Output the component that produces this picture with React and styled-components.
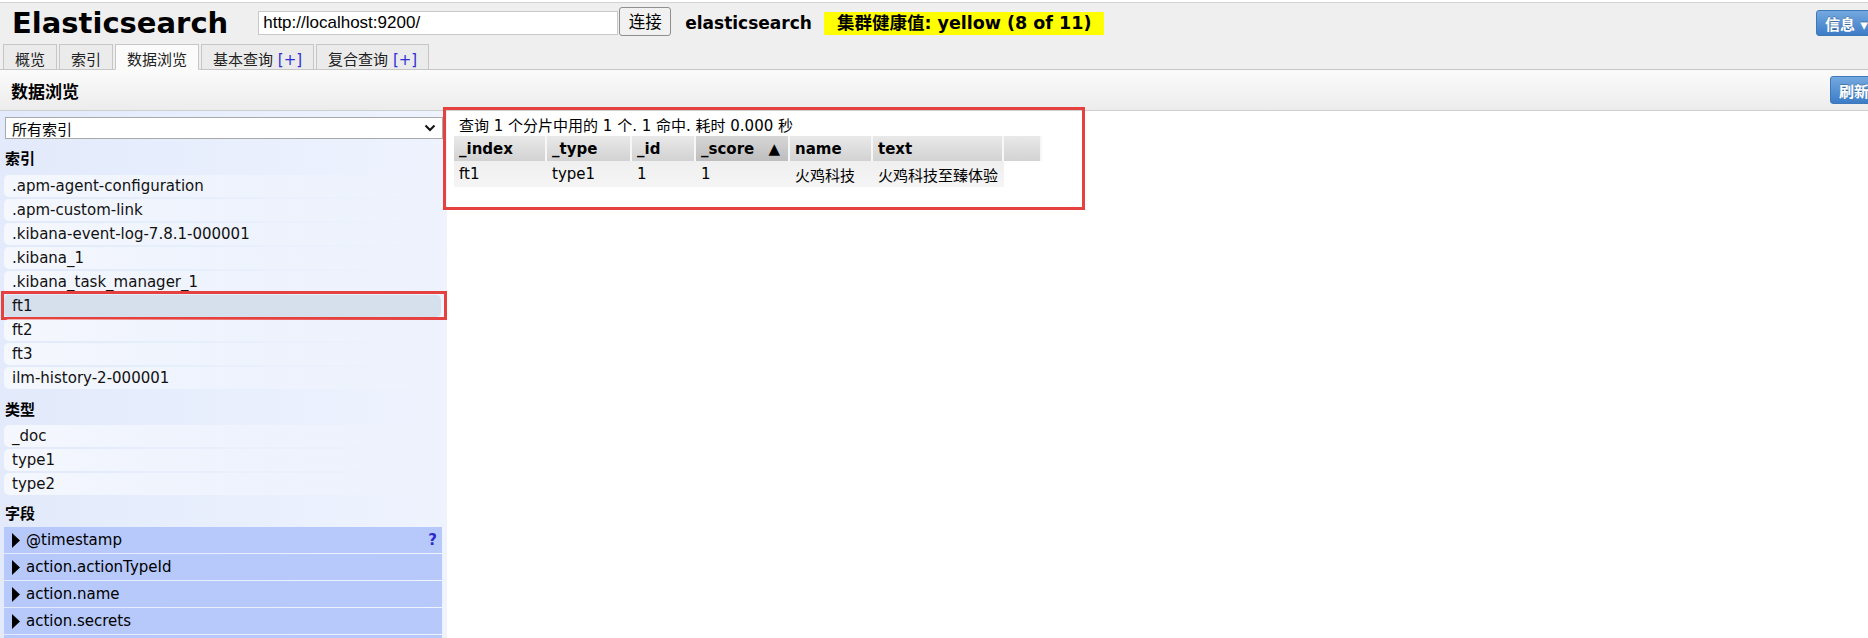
import styled, { createGlobalStyle } from 'styled-components'

const GlobalStyle = createGlobalStyle`
  html, body {
    margin: 0;
    padding: 0;
    background: #fff;
    overflow: hidden;
  }
  body {
    padding-top: 2px;
    font-family: "DejaVu Sans", "Noto Sans CJK SC", sans-serif;
    font-size: 15px;
    color: #000;
  }
`

const Page = styled.div`
  width: 1890px;
  min-height: 636px;
  display: flex;
  flex-direction: column;
`

// ---- 顶部 ----
const Header = styled.div`
  background: #efefef;
  border-top: 1px solid #d2d2d2;
`

const TopRow = styled.div`
  display: flex;
  align-items: center;
  height: 40px;
  padding-left: 12px;
`

const Title = styled.h1`
  margin: 0;
  font-size: 29px;
  line-height: 29px;
  font-weight: bold;
`

const UrlInput = styled.input`
  box-sizing: border-box;
  width: 360px;
  height: 24px;
  margin-left: 30px;
  padding: 0 4px;
  border: 1px solid #c9c9c9;
  background: #fff;
  font-family: "Liberation Sans", Arial, sans-serif;
  font-size: 17px;
  color: #000;
  outline: none;
`

const ConnectButton = styled.button`
  box-sizing: border-box;
  height: 29px;
  width: 52px;
  margin-left: 1px;
  margin-top: -4px;
  padding: 0;
  border: 1px solid #8f8f8f;
  border-radius: 3px;
  background: #f1f1f1;
  font-family: "Noto Sans CJK SC", sans-serif;
  font-size: 16.5px;
  color: #000;
`

const ClusterName = styled.span`
  margin-left: 14px;
  font-size: 17px;
  font-weight: bold;
`

const Health = styled.span`
  margin-left: 12px;
  padding: 0 13px;
  height: 23px;
  line-height: 23px;
  background: #ffff00;
  font-size: 17.5px;
  font-weight: bold;
`

const BlueButton = styled.button`
  box-sizing: border-box;
  width: ${p => p.$w}px;
  height: ${p => p.$h}px;
  margin-left: auto;
  margin-right: 10px;
  padding: 0 0 0 8px;
  text-align: left;
  border: 1px solid #3f78b8;
  border-radius: 3px;
  background: linear-gradient(#74a9e0, #3d7cc6);
  color: #fff;
  font-family: "DejaVu Sans", "Noto Sans CJK SC", sans-serif;
  font-size: 15px;
  font-weight: bold;
  text-shadow: 0 -1px 0 rgba(0, 0, 0, 0.25);
`

const TabBar = styled.div`
  display: flex;
  align-items: flex-end;
  gap: 2px;
  height: 26px;
  padding-left: 3px;
  border-bottom: 1px solid #c6c6c6;
`

const Tab = styled.div`
  box-sizing: border-box;
  height: 26px;
  margin-bottom: -1px;
  padding: 5px 11px 0;
  border: 1px solid #c6c6c6;
  border-bottom: ${p => (p.$active ? '1px solid #fbfbfb' : '1px solid #c6c6c6')};
  background: ${p => (p.$active ? '#fbfbfb' : '#ebebeb')};
  font-size: 15px;
  line-height: 20px;
  color: #222;
`

const Plus = styled.span`
  color: #2f2fd8;
`

// ---- 数据浏览 标题条 ----
const SectionHeader = styled.div`
  display: flex;
  align-items: center;
  height: 40px;
  padding-left: 11px;
  background: linear-gradient(#fbfbfb, #ececec);
  border-bottom: 1px solid #cfcfcf;
`

const SectionTitle = styled.h2`
  margin: 0;
  font-size: 17px;
  font-weight: bold;
`

// ---- 主体 ----
const Body = styled.div`
  flex: 1;
  display: flex;
`

const Sidebar = styled.div`
  box-sizing: border-box;
  width: 447px;
  flex-shrink: 0;
  padding-top: 6px;
  background: linear-gradient(to right, #e2eafb, #eef3fe);
`

const SelectBox = styled.div`
  box-sizing: border-box;
  display: flex;
  align-items: center;
  justify-content: space-between;
  height: 22px;
  margin: 0 4px 0 5px;
  padding: 0 6px 0 6px;
  border: 1px solid #a9a9a9;
  background: #fff;
  font-size: 15px;
`

const Heading = styled.div`
  display: flex;
  align-items: center;
  height: ${p => p.$h}px;
  padding-left: 5px;
  font-weight: bold;
  font-size: 15px;
`

const ItemRow = styled.div`
  position: relative;
  height: 22px;
  line-height: 22px;
  margin: 0 6px 2px 4px;
  padding-left: 8px;
  border-radius: 5px;
  background: ${p =>
    p.$selected
      ? '#d6dfec'
      : 'linear-gradient(to right, rgba(255,255,255,0.65), rgba(255,255,255,0.25) 55%, rgba(255,255,255,0))'};
  font-size: 15px;
  color: #111;
`

const RedFrame = styled.div`
  position: absolute;
  top: -4px;
  bottom: -3px;
  left: -3px;
  right: -6px;
  border: 3px solid #e5413f;
  pointer-events: none;
`

const FieldRow = styled.div`
  display: flex;
  align-items: center;
  height: 26px;
  margin: 0 5px 1px 4px;
  padding: 0 5px 0 8px;
  background: #b6c9fa;
  font-size: 15px;
`

const FieldName = styled.span`
  margin-left: 6px;
`

const Help = styled.span`
  margin-left: auto;
  color: #2b2bd0;
  font-weight: bold;
`

// ---- 结果 ----
const Results = styled.div`
  position: relative;
  flex: 1;
  padding: 5px 0 0 7px;
`

const ResultFrame = styled.div`
  position: absolute;
  left: -4px;
  top: -4px;
  width: 636px;
  height: 97px;
  border: 3px solid #e5413f;
  pointer-events: none;
`

const QueryInfo = styled.div`
  height: 20px;
  line-height: 20px;
  padding-left: 5px;
  font-size: 15px;
`

const Table = styled.table`
  border-collapse: separate;
  border-spacing: 0;
  font-size: 15px;
`

const Th = styled.th`
  box-sizing: border-box;
  width: ${p => p.$w}px;
  height: 25px;
  padding: 0 0 0 5px;
  text-align: left;
  font-weight: bold;
  border-right: 2px solid #f7f7f7;
  background: ${p => (p.$sorted ? 'linear-gradient(#d6d6d6, #bebebe)' : 'linear-gradient(#e9e9e9, #d2d2d2)')};
  white-space: nowrap;
`

const SortLabel = styled.div`
  display: flex;
  justify-content: space-between;
  padding-right: 8px;
`

const Td = styled.td`
  height: 26px;
  padding: 0 0 0 5px;
  background: linear-gradient(#efefef, #f5f5f5);
  white-space: nowrap;
`

const indices = [
  '.apm-agent-configuration',
  '.apm-custom-link',
  '.kibana-event-log-7.8.1-000001',
  '.kibana_1',
  '.kibana_task_manager_1',
  'ft1',
  'ft2',
  'ft3',
  'ilm-history-2-000001',
]

const types = ['_doc', 'type1', 'type2']

const fields = ['@timestamp', 'action.actionTypeId', 'action.name', 'action.secrets']

const columns = [
  { name: '_index', w: 93 },
  { name: '_type', w: 85 },
  { name: '_id', w: 64 },
  { name: '_score', w: 94, sorted: true },
  { name: 'name', w: 83 },
  { name: 'text', w: 131 },
  { name: '', w: 38 },
]

const row = ['ft1', 'type1', '1', '1', '火鸡科技', '火鸡科技至臻体验']

function Chevron() {
  return (
    <svg width="12" height="8" viewBox="0 0 12 8">
      <path d="M1.5 1.5 L6 6 L10.5 1.5" fill="none" stroke="#111" strokeWidth="2" />
    </svg>
  )
}

function Arrow() {
  return (
    <svg width="8" height="15" viewBox="0 0 8 15">
      <path d="M0 0 L8 7.5 L0 15 Z" fill="#000" />
    </svg>
  )
}

export default function App() {
  return (
    <Page>
      <GlobalStyle />
      <Header>
        <TopRow>
          <Title>Elasticsearch</Title>
          <UrlInput readOnly defaultValue="http://localhost:9200/" />
          <ConnectButton>连接</ConnectButton>
          <ClusterName>elasticsearch</ClusterName>
          <Health>集群健康值: yellow (8 of 11)</Health>
          <BlueButton $w={64} $h={26}>信息 ▾</BlueButton>
        </TopRow>
        <TabBar>
          <Tab>概览</Tab>
          <Tab>索引</Tab>
          <Tab $active>数据浏览</Tab>
          <Tab>基本查询 <Plus>[+]</Plus></Tab>
          <Tab>复合查询 <Plus>[+]</Plus></Tab>
        </TabBar>
      </Header>

      <SectionHeader>
        <SectionTitle>数据浏览</SectionTitle>
        <BlueButton $w={50} $h={28}>刷新</BlueButton>
      </SectionHeader>

      <Body>
        <Sidebar>
          <SelectBox>
            <span>所有索引</span>
            <Chevron />
          </SelectBox>

          <Heading $h={36}>索引</Heading>
          {indices.map(name => (
            <ItemRow key={name} $selected={name === 'ft1'}>
              {name}
              {name === 'ft1' && <RedFrame />}
            </ItemRow>
          ))}

          <Heading $h={34}>类型</Heading>
          {types.map(t => (
            <ItemRow key={t}>{t}</ItemRow>
          ))}

          <Heading $h={30}>字段</Heading>
          {fields.map((f, i) => (
            <FieldRow key={f}>
              <Arrow />
              <FieldName>{f}</FieldName>
              {i === 0 && <Help>?</Help>}
            </FieldRow>
          ))}
          <FieldRow />
        </Sidebar>

        <Results>
          <ResultFrame />
          <QueryInfo>查询 1 个分片中用的 1 个. 1 命中. 耗时 0.000 秒</QueryInfo>
          <Table>
            <thead>
              <tr>
                {columns.map((c, i) => (
                  <Th key={i} $w={c.w} $sorted={c.sorted}>
                    {c.sorted ? (
                      <SortLabel>
                        <span>{c.name}</span>
                        <span>▲</span>
                      </SortLabel>
                    ) : (
                      c.name
                    )}
                  </Th>
                ))}
              </tr>
            </thead>
            <tbody>
              <tr>
                {row.map((v, i) => (
                  <Td key={i}>{v}</Td>
                ))}
              </tr>
            </tbody>
          </Table>
        </Results>
      </Body>
    </Page>
  )
}
